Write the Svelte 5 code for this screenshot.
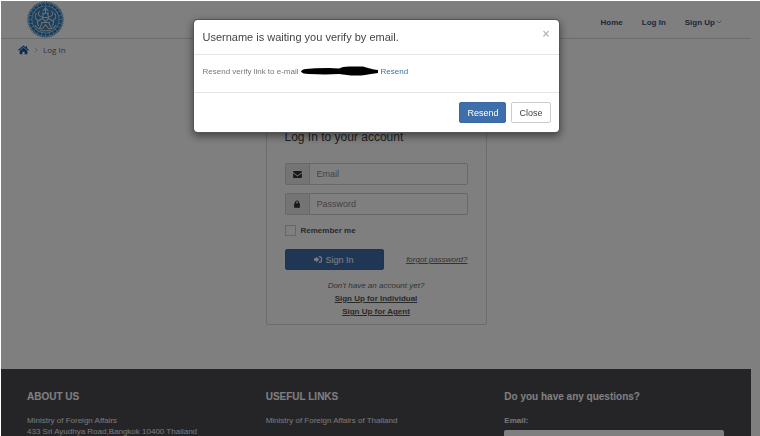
<script lang="ts">
  let email = $state("")
  let password = $state("")
  let remember = $state(false)
  let contact = $state("")
  let open = $state(true)

  const rays = Array.from({ length: 24 }, (_, i) => i * 15)
</script>

<div class="page">
  <header class="header">
    <a class="logo" href="#home" aria-label="Ministry of Foreign Affairs">
      <svg viewBox="0 0 36 36" width="37" height="37">
        <circle cx="18" cy="18" r="17" fill="#a9cbe4" stroke="#4f93c8" stroke-width="1.4" stroke-dasharray="1 .7" />
        <circle cx="18" cy="18" r="14.8" fill="none" stroke="#2373b8" stroke-width="2.2" />
        {#each rays as angle}
          <path d="M18 2v3" stroke="#c9dfef" stroke-width=".6" transform="rotate({angle} 18 18)" />
        {/each}
        <circle cx="18" cy="18" r="12.8" fill="#3b83bd" />
        <g fill="none" stroke="#d6e4ea" stroke-width="1" stroke-linecap="round" stroke-linejoin="round">
          <path d="M18 6v5M15.5 9.5L18 7l2.5 2.5M15 12h6M16 12l-1 4h6l-1-4" />
          <path d="M14 15c-3 0-4-3-2-5M22 15c3 0 4-3 2-5M9 12c-2 3-1 6 2 7M27 12c2 3 1 6-2 7" />
          <path d="M15 17l-5 3 1 4M21 17l5 3-1 4M15 17l3 3 3-3M14 21h8" />
          <path d="M15 21l-3 6h3l3-4 3 4h3l-3-6M8 24l3 3M28 24l-3 3M13 29h10" />
        </g>
      </svg>
    </a>
    <nav class="nav">
      <a href="#home">Home</a>
      <a href="#login">Log In</a>
      <a href="#signup">
        Sign Up
        <svg viewBox="0 0 6 4" width="6" height="4">
          <path d="M.7.7L3 3 5.300.7" fill="none" stroke="#999" stroke-width=".9" />
        </svg>
      </a>
    </nav>
  </header>

  <nav class="breadcrumb" aria-label="Breadcrumb">
    <a href="#home" aria-label="Home">
      <svg viewBox="0 0 12 10" width="11" height="10">
        <path d="M6 2.300L1.800 5.800V9.500h3V6.800h2.400v2.700h3V5.800z" fill="#22579c" />
        <path d="M.5 5.300L6 .8l5.500 4.500M9.200.8v2.500" fill="none" stroke="#22579c" stroke-width="1.300" />
      </svg>
    </a>
    <svg viewBox="0 0 4 6" width="4" height="6">
      <path d="M.8.6L3.200 3 .8 5.400" fill="none" stroke="#aaa" stroke-width=".8" />
    </svg>
    <span>Log In</span>
  </nav>

  <main class="main">
    <form class="login" onsubmit={(e) => e.preventDefault()}>
      <h1>Log In to your account</h1>
      <div class="field">
        <label for="email" aria-label="Email">
          <svg viewBox="0 0 10 8" width="9" height="7">
            <path d="M0 .8Q0 0 .8 0h8.400Q10 0 10 .8v.5L5 5 0 1.300zM0 2.600L5 6.200l5-3.600v4.600q0 .8-.8.8H.8Q0 8 0 7.200z" fill="#333" />
          </svg>
        </label>
        <input id="email" type="text" placeholder="Email" bind:value={email} />
      </div>
      <div class="field">
        <label for="password" aria-label="Password">
          <svg viewBox="0 0 8 10" width="6" height="8">
            <path d="M.5 4.500h7v5h-7z" fill="#333" stroke="#333" stroke-linejoin="round" />
            <path d="M2 4.500V3a2 2 0 0 1 4 0v1.500" fill="none" stroke="#333" stroke-width="1.400" />
          </svg>
        </label>
        <input id="password" type="password" placeholder="Password" bind:value={password} />
      </div>
      <label class="remember">
        <input type="checkbox" bind:checked={remember} />
        Remember me
      </label>
      <div class="submit">
        <button class="btn primary sign-in" type="submit">
          <svg viewBox="0 0 10 8" width="8" height="7">
            <path d="M0 2.500h2.800V.4L6.400 4 2.800 7.600v-2.100H0z" fill="#fff" />
            <path d="M6 .7h2q1.300 0 1.300 1.300v4Q9.300 7.300 8 7.300H6" fill="none" stroke="#fff" stroke-width="1.400" />
          </svg>
          Sign In
        </button>
        <a class="forgot" href="#forgot">forgot password?</a>
      </div>
      <div class="signup">
        <em>Don't have an account yet?</em>
        <a href="#individual">Sign Up for Individual</a>
        <a href="#agent">Sign Up for Agent</a>
      </div>
    </form>
  </main>

  <footer class="footer">
    <section>
      <h2>ABOUT US</h2>
      <p>Ministry of Foreign Affairs<br />433 Sri Ayudhya Road,Bangkok 10400 Thailand</p>
    </section>
    <section>
      <h2>USEFUL LINKS</h2>
      <a href="#mfa">Ministry of Foreign Affairs of Thailand</a>
    </section>
    <section>
      <h2>Do you have any questions?</h2>
      <label for="contact">Email:</label>
      <input id="contact" type="email" bind:value={contact} />
    </section>
  </footer>
</div>

{#if open}
  <div class="backdrop">
    <div class="modal" role="dialog" aria-modal="true" aria-labelledby="modal-title">
      <div class="modal-header">
        <h4 id="modal-title">Username is waiting you verify by email.</h4>
        <button class="close" aria-label="Close dialog" onclick={() => (open = false)}>×</button>
      </div>
      <div class="modal-body">
        <span>Resend verify link to e-mail</span>
        <svg viewBox="0 0 78 10" width="78" height="10">
          <path
            d="M0 5.500Q1 3 5 3L14 2.200 28 2 38 2.500 42 1 48 .500 62 .500 67 2 73 3.500 77 4V7L70 8 64 9 60 9.500H50L42 8.500 38 8 24 8.500 8 8Q1 8 0 5.500z"
            fill="#000"
          />
        </svg>
        <a href="#resend">Resend</a>
      </div>
      <div class="modal-footer">
        <button class="btn primary">Resend</button>
        <button class="btn" onclick={() => (open = false)}>Close</button>
      </div>
    </div>
  </div>
{/if}

<style>
  :global(body) {
    overflow: hidden;
    background: #fff;
  }

  .page,
  .backdrop {
    font-family: "Liberation Sans", Arial, sans-serif;
    font-size: 8px;
    line-height: 11px;
    color: #666;
  }

  .page,
  .page *,
  .backdrop,
  .backdrop * {
    box-sizing: border-box;
  }

  .page {
    height: 100vh;
    overflow: hidden;
    padding: 0 9px 0 1px;
  }

  h1,
  h2,
  h4,
  p {
    margin: 0;
  }

  a {
    color: inherit;
    text-decoration: none;
  }

  button,
  input {
    font-family: inherit;
    font-size: inherit;
  }

  svg {
    flex: none;
  }

  .header {
    display: flex;
    align-items: center;
    justify-content: space-between;
    height: 39px;
    padding: 0 29px 0 26px;
    border-bottom: 1px solid #d8d8d8;
  }

  .logo {
    display: flex;
  }

  .nav {
    display: flex;
    gap: 19px;
    padding-top: 6px;
    font-weight: bold;
    color: #36517c;
  }

  .nav a {
    display: flex;
    align-items: center;
    gap: 1px;
  }

  .breadcrumb {
    display: flex;
    align-items: center;
    gap: 5px;
    height: 21px;
    padding-left: 17px;
    font-family: "Open Sans", sans-serif;
  }

  .breadcrumb a {
    display: flex;
  }

  .main {
    display: flex;
    justify-content: center;
    padding: 54px 0 44px;
  }

  .login {
    width: 221px;
    padding: 14px 18px 7px;
    border: 1px solid #d8d8d8;
    border-radius: 2px;
  }

  .login h1 {
    margin-bottom: 18px;
    font-size: 12px;
    font-weight: normal;
    line-height: 16px;
    color: #444;
  }

  .field {
    display: flex;
    height: 22px;
    margin-bottom: 8px;
    border: 1px solid #d0d0d0;
    border-radius: 2px;
  }

  .field label {
    display: flex;
    align-items: center;
    justify-content: center;
    width: 24px;
    background: #e8e8e8;
    border-right: 1px solid #d0d0d0;
  }

  .field input {
    flex: 1;
    min-width: 0;
    padding: 0 7px;
    border: 0;
    background: none;
    font-size: 9px;
  }

  .field input::placeholder {
    color: #888;
  }

  .remember {
    display: flex;
    align-items: center;
    gap: 5px;
    margin-top: 10px;
    font-weight: bold;
    color: #555;
  }

  .remember input {
    appearance: none;
    width: 11px;
    height: 11px;
    margin: 0;
    border: 1px solid #ccc;
  }

  .submit {
    display: flex;
    align-items: center;
    justify-content: space-between;
    margin-top: 13px;
  }

  .btn {
    display: flex;
    align-items: center;
    justify-content: center;
    gap: 3px;
    height: 21px;
    padding: 0 7px;
    border: 1px solid #ccc;
    border-radius: 2px;
    background: #fff;
    font-size: 9px;
    color: #444;
  }

  .primary {
    border-color: #386ba6;
    background: #3f6fab;
    color: #fff;
  }

  .sign-in {
    width: 99px;
  }

  .forgot {
    font-style: italic;
    text-decoration: underline;
  }

  .signup {
    display: flex;
    flex-direction: column;
    align-items: center;
    gap: 2px;
    margin-top: 10px;
  }

  .signup a {
    font-weight: bold;
    text-decoration: underline;
    color: #555;
  }

  .footer {
    display: grid;
    grid-template-columns: repeat(3, 1fr);
    gap: 19px;
    padding: 20px 27px 20px 26px;
    background: #4a4a50;
    color: #eee;
  }

  .footer h2 {
    margin-bottom: 10px;
    font-size: 10px;
    line-height: 16px;
    color: #fff;
  }

  .footer a,
  .footer label {
    display: block;
  }

  .footer label {
    font-weight: bold;
  }

  .footer input {
    width: 100%;
    height: 22px;
    margin-top: 4px;
    border: 0;
    border-radius: 2px;
    background: #fff;
  }

  /* the dimmed layer starts just inside the window edge */
  .backdrop {
    position: fixed;
    inset: 1px 0 0 1px;
    padding: 18px 9px 0 0;
    background: rgba(0, 0, 0, 0.5);
  }

  .modal {
    width: 367px;
    margin: 0 auto;
    border: 1px solid #555;
    border-radius: 4px;
    background: #fff;
    background-clip: padding-box;
    box-shadow: 0 3px 8px rgba(0, 0, 0, 0.5);
  }

  .modal-header {
    display: flex;
    justify-content: space-between;
    height: 35px;
    padding: 9px;
    border-bottom: 1px solid #e5e5e5;
  }

  .modal-header h4 {
    font-size: 11px;
    font-weight: normal;
    line-height: 17px;
    color: #444;
  }

  .close {
    height: 10px;
    padding: 0;
    border: 0;
    background: none;
    font-size: 12px;
    font-weight: bold;
    line-height: 10px;
    color: #bbb;
  }

  .modal-body {
    display: flex;
    align-items: center;
    gap: 2px;
    height: 38px;
    padding: 0 9px 5px;
    border-bottom: 1px solid #e5e5e5;
    color: #777;
  }

  .modal-body a {
    color: #3f6fab;
  }

  .modal-footer {
    display: flex;
    justify-content: flex-end;
    gap: 5px;
    padding: 9px 8px 9px 9px;
  }
</style>
